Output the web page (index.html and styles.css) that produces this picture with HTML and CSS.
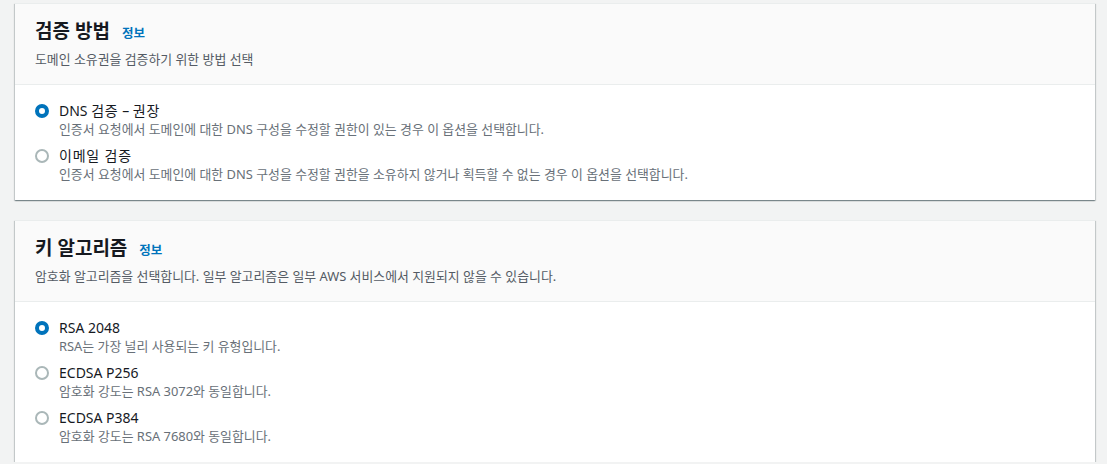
FILE: index.html
```html
<!DOCTYPE html>
<html lang="ko">
<head>
<meta charset="utf-8">
<link rel="stylesheet" href="styles.css">
</head>
<body>
<div class="page">
  <section class="card">
    <header class="card-head">
      <h2 class="title">검증 방법 <a class="info" href="#">정보</a></h2>
      <p class="desc">도메인 소유권을 검증하기 위한 방법 선택</p>
    </header>
    <div class="card-body">
      <label class="opt">
        <span class="radio checked"></span>
        <span class="opt-text">
          <span class="opt-label">DNS <span class="ko">검증</span> – <span class="ko">권장</span></span>
          <span class="opt-desc">인증서 요청에서 도메인에 대한 DNS 구성을 수정할 권한이 있는 경우 이 옵션을 선택합니다.</span>
        </span>
      </label>
      <label class="opt">
        <span class="radio"></span>
        <span class="opt-text">
          <span class="opt-label"><span class="ko">이메일 검증</span></span>
          <span class="opt-desc">인증서 요청에서 도메인에 대한 DNS 구성을 수정할 권한을 소유하지 않거나 획득할 수 없는 경우 이 옵션을 선택합니다.</span>
        </span>
      </label>
    </div>
  </section>

  <section class="card">
    <header class="card-head">
      <h2 class="title">키 알고리즘 <a class="info" href="#">정보</a></h2>
      <p class="desc">암호화 알고리즘을 선택합니다. 일부 알고리즘은 일부 AWS 서비스에서 지원되지 않을 수 있습니다.</p>
    </header>
    <div class="card-body">
      <label class="opt">
        <span class="radio checked"></span>
        <span class="opt-text">
          <span class="opt-label">RSA 2048</span>
          <span class="opt-desc">RSA는 가장 널리 사용되는 키 유형입니다.</span>
        </span>
      </label>
      <label class="opt">
        <span class="radio"></span>
        <span class="opt-text">
          <span class="opt-label">ECDSA P256</span>
          <span class="opt-desc">암호화 강도는 RSA 3072와 동일합니다.</span>
        </span>
      </label>
      <label class="opt">
        <span class="radio"></span>
        <span class="opt-text">
          <span class="opt-label">ECDSA P384</span>
          <span class="opt-desc">암호화 강도는 RSA 7680와 동일합니다.</span>
        </span>
      </label>
    </div>
  </section>
</div>
</body>
</html>
```

FILE: styles.css
```css
* { box-sizing: border-box; }
html, body { margin: 0; padding: 0; }
body {
  background: #f2f3f3;
  font-family: "Noto Sans", "Noto Sans CJK KR", sans-serif;
  color: #16191f;
}
.page {
  padding: 3px 12px 0 15px;
  display: flex;
  flex-direction: column;
  gap: 20px;
}
.card {
  width: 1080px;
  background: #fff;
  border-top: 1px solid #eaeded;
  box-shadow: 0 1px 1px 0 rgba(0,28,36,.3), 1px 1px 1px 0 rgba(0,28,36,.15), -1px 1px 1px 0 rgba(0,28,36,.15);
}
.card-head {
  background: #fafafa;
  border-bottom: 1px solid #eaeded;
  padding: 16px 20px 17px;
}
.title {
  margin: 0;
  font-size: 19px;
  line-height: 22px;
  font-weight: 700;
  color: #16191f;
  display: flex;
  align-items: baseline;
}
.info {
  margin-left: 12px;
  font-size: 12.5px;
  font-weight: 700;
  color: #0073bb;
  text-decoration: none;
}
.desc {
  margin: 6px 0 0;
  font-size: 12.9px;
  line-height: 16px;
  color: #545b64;
}
.card-body {
  padding: 16px 20px 18px;
  display: flex;
  flex-direction: column;
  gap: 9px;
}
.opt {
  display: flex;
  align-items: flex-start;
  gap: 10px;
}
.radio {
  flex: none;
  width: 14px;
  height: 14px;
  margin-top: 3px;
  border-radius: 50%;
  border: 2px solid #aab7b8;
  background: #fff;
}
.radio.checked {
  border: 4px solid #0073bb;
}
.opt-text {
  display: flex;
  flex-direction: column;
}
.opt-label {
  font-size: 14px;
  line-height: 20px;
  color: #16191f;
}
.ko {
  letter-spacing: 0.8px;
}
.opt-desc {
  font-size: 12.9px;
  line-height: 16px;
  color: #687078;
}
```
